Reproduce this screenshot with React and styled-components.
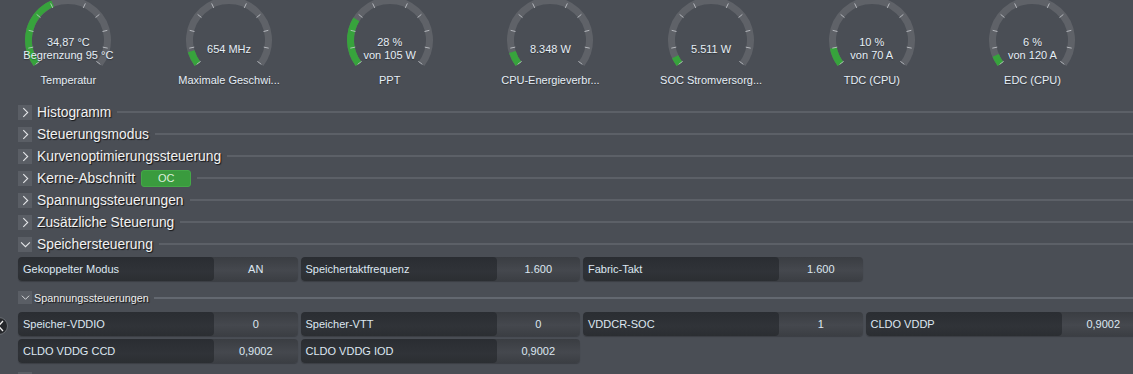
import React from 'react'
import styled, { createGlobalStyle } from 'styled-components'

const START = -127
const SWEEP = 254

const gauges = [
    { lines: ['34,87 °C', 'Begrenzung 95 °C'], label: 'Temperatur', fill: 0.41 },
    { lines: ['654  MHz'], label: 'Maximale Geschwi...', fill: 0.08 },
    { lines: ['28 %', 'von 105 W'], label: 'PPT', fill: 0.27 },
    { lines: ['8.348 W'], label: 'CPU-Energieverbr...', fill: 0.076 },
    { lines: ['5.511 W'], label: 'SOC Stromversorg...', fill: 0.047 },
    { lines: ['10 %', 'von 70 A'], label: 'TDC (CPU)', fill: 0.1 },
    { lines: ['6 %', 'von 120 A'], label: 'EDC (CPU)', fill: 0.055 },
]

const sections = [
    { title: 'Histogramm' },
    { title: 'Steuerungsmodus' },
    { title: 'Kurvenoptimierungssteuerung' },
    { title: 'Kerne-Abschnitt', badge: 'OC' },
    { title: 'Spannungssteuerungen' },
    { title: 'Zusätzliche Steuerung' },
    { title: 'Speichersteuerung', open: true },
]

const memory = [
    ['Gekoppelter Modus', 'AN'],
    ['Speichertaktfrequenz', '1.600'],
    ['Fabric-Takt', '1.600'],
]

const voltages = [
    ['Speicher-VDDIO', '0'],
    ['Speicher-VTT', '0'],
    ['VDDCR-SOC', '1'],
    ['CLDO VDDP', '0,9002'],
    ['CLDO VDDG CCD', '0,9002'],
    ['CLDO VDDG IOD', '0,9002'],
]

function polar(a, r) {
    const rad = (a * Math.PI) / 180
    return [50 + r * Math.sin(rad), 50 - r * Math.cos(rad)]
}

function arc(from, to, r) {
    const [x1, y1] = polar(from, r)
    const [x2, y2] = polar(to, r)
    const large = to - from > 180 ? 1 : 0
    return `M ${x1} ${y1} A ${r} ${r} 0 ${large} 1 ${x2} ${y2}`
}

function Dial({ fill }) {
    const ticks = []
    for (let i = 0; i <= 10; i++) {
        const a = START + (SWEEP / 10) * i
        const [x1, y1] = polar(a, i === 5 ? 43 : 35.5)
        const [x2, y2] = polar(a, 40.5)
        ticks.push(<line key={i} x1={x1} y1={y1} x2={x2} y2={y2} stroke="#d0d3d8" strokeOpacity={i === 5 ? 0.95 : 0.75} strokeWidth="1" />)
    }
    return (
        <DialSvg viewBox="0 0 100 80" width="100" height="80">
            <path d={arc(START, START + SWEEP, 39.5)} fill="none" stroke="#5f6268" strokeWidth="7" />
            <path d={arc(START, START + SWEEP * fill, 39.5)} fill="none" stroke="#37a33c" strokeWidth="7" />
            {ticks}
        </DialSvg>
    )
}

function Chevron({ open, size }) {
    return (
        <svg width={size} height={size} viewBox="0 0 10 10">
            {open
                ? <path d="M1 3 L5 7 L9 3" fill="none" stroke="#e4e6e8" strokeWidth="1" />
                : <path d="M3 1 L7 5 L3 9" fill="none" stroke="#e4e6e8" strokeWidth="1" />}
        </svg>
    )
}

function Cell({ label, value }) {
    return (
        <CellBox>
            <CellLabel>{label}</CellLabel>
            <CellValue>{value}</CellValue>
        </CellBox>
    )
}

function App() {
    return (
        <Page>
            <GlobalStyle />
            <GaugeRow>
                {gauges.map(g => (
                    <Gauge key={g.label}>
                        <DialStack>
                            <Dial fill={g.fill} />
                            <Reading>
                                {g.lines.map(l => <div key={l}>{l}</div>)}
                            </Reading>
                        </DialStack>
                        <GaugeLabel>{g.label}</GaugeLabel>
                    </Gauge>
                ))}
            </GaugeRow>

            <Sections>
                {sections.map(s => (
                    <SectionHeader key={s.title}>
                        <ToggleBox><Chevron open={s.open} size={11} /></ToggleBox>
                        <SectionTitle>{s.title}</SectionTitle>
                        {s.badge && <Badge>{s.badge}</Badge>}
                        <Rule />
                    </SectionHeader>
                ))}

                <CellGrid>
                    {memory.map(([l, v]) => <Cell key={l} label={l} value={v} />)}
                </CellGrid>

                <SubHeader>
                    <SmallToggle><Chevron open size={9} /></SmallToggle>
                    <SubTitle>Spannungssteuerungen</SubTitle>
                    <Rule $light />
                </SubHeader>

                <CellGrid>
                    {voltages.map(([l, v]) => <Cell key={l} label={l} value={v} />)}
                </CellGrid>

                <SubHeader $next>
                    <SmallToggle><Chevron size={9} /></SmallToggle>
                </SubHeader>
            </Sections>

            <SideToggle>
                <svg width="8" height="12" viewBox="0 0 8 12">
                    <path d="M6 1 L1.5 6 L6 11" fill="none" stroke="#f0f0f0" strokeWidth="1.3" />
                </svg>
            </SideToggle>
        </Page>
    )
}

export default App

const GlobalStyle = createGlobalStyle`
    html, body {
        margin: 0;
        padding: 0;
        background: #4a4e55;
    }
    body {
        font-family: "Liberation Sans", Arial, sans-serif;
        overflow: hidden;
    }
`

const Page = styled.div`
    position: relative;
    width: 1133px;
    height: 374px;
    overflow: hidden;
    background: #4a4e55;
`

const GaugeRow = styled.div`
    display: grid;
    grid-template-columns: repeat(7, 160.7px);
    margin: -10px 0 0 -12px;
`

const Gauge = styled.div`
    display: flex;
    flex-direction: column;
    align-items: center;
`

const DialStack = styled.div`
    display: grid;
    width: 100px;
    height: 80px;
    > * {
        grid-area: 1 / 1;
    }
`

const DialSvg = styled.svg`
    display: block;
`

const Reading = styled.div`
    align-self: start;
    margin-top: 44px;
    height: 30px;
    display: flex;
    flex-direction: column;
    justify-content: center;
    align-items: center;
    font-size: 11px;
    line-height: 13px;
    color: #e6eef6;
    white-space: nowrap;
    text-shadow: 0 1px 1px rgba(0,0,0,0.35);
`

const GaugeLabel = styled.div`
    margin-top: 3px;
    font-size: 11px;
    line-height: 14px;
    color: #e6eef6;
    white-space: nowrap;
    text-shadow: 0 1px 1px rgba(0,0,0,0.35);
`

const Sections = styled.div`
    margin-top: 14px;
    padding-left: 18px;
`

const SectionHeader = styled.div`
    display: flex;
    align-items: center;
    height: 22px;
`

const ToggleBox = styled.div`
    width: 14px;
    height: 15px;
    flex: none;
    display: flex;
    align-items: center;
    justify-content: center;
    background: #5a5e65;
`

const SectionTitle = styled.span`
    margin-left: 5px;
    font-size: 13.8px;
    color: #f2f2f2;
    white-space: nowrap;
    text-shadow: 1px 1px 1px rgba(0,0,0,0.75);
`

const Badge = styled.span`
    margin-left: 6px;
    width: 50px;
    height: 17px;
    flex: none;
    display: flex;
    align-items: center;
    justify-content: center;
    background: #3a9b3e;
    border: 1px solid #44a848;
    box-sizing: border-box;
    border-radius: 3px;
    font-size: 11px;
    color: #dcefdc;
`

const Rule = styled.div`
    flex: 1;
    height: 2px;
    margin-left: ${p => (p.$light ? '5px' : '6px')};
    background: ${p => (p.$light ? '#636870' : '#5c6067')};
`

const CellGrid = styled.div`
    display: grid;
    grid-template-columns: repeat(4, 279.5px);
    column-gap: 3px;
    row-gap: 3px;
    margin-top: 2px;
`

const CellBox = styled.div`
    display: flex;
    height: 24px;
    border-radius: 4px;
    overflow: hidden;
    background: linear-gradient(#3a3d42, #45484e 55%, #3b3e43);
    box-shadow: 0 1px 1px rgba(0,0,0,0.2);
`

const CellLabel = styled.div`
    width: 196px;
    flex: none;
    display: flex;
    align-items: center;
    padding-left: 5px;
    box-sizing: border-box;
    border-radius: 4px;
    background: linear-gradient(#2a2d32, #303338 60%, #2b2e32);
    font-size: 11px;
    color: #dde7f1;
    white-space: nowrap;
`

const CellValue = styled.div`
    flex: 1;
    display: flex;
    align-items: center;
    justify-content: center;
    font-size: 11px;
    color: #dde7f1;
`

const SubHeader = styled.div`
    display: flex;
    align-items: center;
    height: 25px;
    margin-top: ${p => (p.$next ? '3px' : '4px')};
`

const SmallToggle = styled.div`
    width: 14px;
    height: 13px;
    flex: none;
    display: flex;
    align-items: center;
    justify-content: center;
    background: #5a5e65;
`

const SubTitle = styled.span`
    margin-left: 2px;
    font-size: 10.8px;
    color: #eeeeee;
    white-space: nowrap;
    text-shadow: 1px 1px 1px rgba(0,0,0,0.75);
`

const SideToggle = styled.div`
    position: absolute;
    left: -10px;
    top: 317px;
    width: 18px;
    height: 18px;
    border-radius: 50%;
    background: #25272b;
    border: 1px solid #6a6e74;
    box-sizing: border-box;
    display: flex;
    align-items: center;
    justify-content: flex-end;
    padding-right: 2px;
`
